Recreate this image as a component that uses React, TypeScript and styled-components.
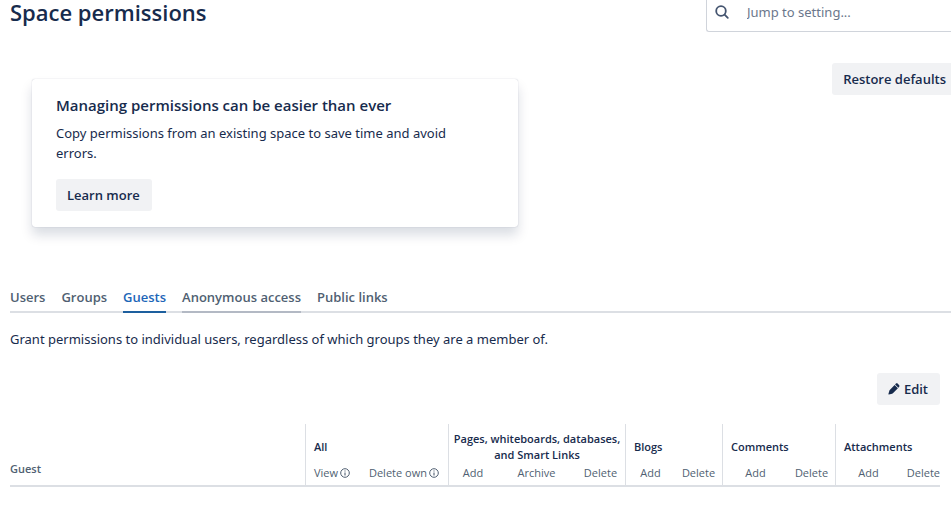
import React from "react";
import styled, { createGlobalStyle } from "styled-components";

const ink = "#172b4d";
const muted = "#505f72";

const GlobalStyle = createGlobalStyle`
  *, *::before, *::after { box-sizing: border-box; }
  body {
    margin: 0;
    overflow-x: hidden;
    background: #fff;
    color: ${ink};
    font: 400 13px/20px "Noto Sans", "Open Sans", sans-serif;
  }
  h1, h2, p { margin: 0; }
  button, input { font: inherit; color: inherit; }
`;

const Page = styled.div`
  padding-left: 10px;
`;

const Header = styled.header`
  display: flex;
  justify-content: space-between;
  align-items: flex-start;
`;

const Title = styled.h1`
  font-family: "Open Sans", sans-serif;
  font-size: 22px;
  line-height: 24px;
  font-weight: 600;
`;

const Search = styled.label`
  display: flex;
  align-items: center;
  gap: 16px;
  width: 245px;
  height: 32px;
  padding: 0 0 7px 6px;
  border: solid #d0d4db;
  border-width: 0 0 1px 1px;
  border-bottom-left-radius: 3px;
  color: #44546f;
`;

const SearchInput = styled.input`
  flex: 1;
  min-width: 0;
  padding: 0;
  border: 0;
  outline: 0;
  background: transparent;
  &::placeholder { color: #6b778c; opacity: 1; }
`;

const Intro = styled.section`
  display: flex;
  justify-content: space-between;
  align-items: flex-start;
  margin-top: 31px;
`;

const Button = styled.button<{ $flush?: boolean }>`
  display: inline-flex;
  align-items: center;
  gap: 4px;
  height: 32px;
  padding: 0 ${(p) => (p.$flush ? 5 : 12)}px 0 11px;
  border: 0;
  border-radius: ${(p) => (p.$flush ? "3px 0 0 3px" : "3px")};
  background: #f1f2f4;
  font-family: "Open Sans", sans-serif;
  font-weight: 600;
  white-space: nowrap;
`;

const Card = styled.article`
  flex: 0 1 486px;
  margin: 16px 22px 0;
  padding: 16px 24px;
  border-radius: 3px;
  box-shadow: 0 8px 12px rgba(9, 30, 66, 0.15), 0 0 1px rgba(9, 30, 66, 0.31);
`;

const CardTitle = styled.h2`
  font-family: "Open Sans", sans-serif;
  font-size: 15px;
  line-height: 20px;
  font-weight: 600;
`;

const CardText = styled.p`
  max-width: 410px;
  margin: 8px 0 16px;
`;

const Tabs = styled.div`
  display: flex;
  gap: 16px;
  margin-top: 57px;
  box-shadow: inset 0 -2px #dcdfe4;
`;

const Tab = styled.button<{ $line?: string }>`
  padding: 3px 0 4px;
  border: 0;
  border-bottom: 2px solid ${(p) => p.$line ?? "transparent"};
  background: none;
  color: ${muted};
  font-family: "Open Sans", sans-serif;
  font-weight: 600;
  white-space: nowrap;
  &[aria-selected="true"] { color: #1d66b8; }
`;

const Description = styled.p`
  margin-top: 16px;
`;

const Toolbar = styled.div`
  display: flex;
  justify-content: flex-end;
  margin: 24px 11px 0 0;
`;

const TableArea = styled.div`
  margin: 19px 11px 0 0;
`;

const Table = styled.table`
  width: 100%;
  table-layout: fixed;
  border-collapse: separate;
  border-spacing: 0;
  font-family: "Open Sans", sans-serif;
  font-size: 11px;
  line-height: 16px;
  color: ${muted};
`;

const Col = styled.col<{ $w?: number }>`
  width: ${(p) => (p.$w ? `${p.$w}px` : "auto")};
`;

const GuestHead = styled.th`
  padding: 0 0 8px;
  border-bottom: 2px solid #dcdfe4;
  vertical-align: bottom;
  text-align: left;
  font-weight: 600;
`;

const GroupHead = styled.th<{ $center?: boolean }>`
  height: 39px;
  padding: 7px 0 0 ${(p) => (p.$center ? 0 : 8)}px;
  border-left: 1px solid #dcdfe4;
  text-align: ${(p) => (p.$center ? "center" : "left")};
  color: ${ink};
  font-weight: 600;
  white-space: nowrap;
`;

const SubHead = styled.th<{ $first: boolean; $align: string }>`
  padding: 2px 0 4px ${(p) => (p.$align === "left" ? 8 : 0)}px;
  border-left: ${(p) => (p.$first ? "1px solid #dcdfe4" : "0")};
  border-bottom: 2px solid #dcdfe4;
  text-align: ${(p) => p.$align};
  font-weight: 400;
  white-space: nowrap;
`;

const Hint = styled.span`
  display: inline-flex;
  align-items: center;
  gap: 2px;
`;

const InfoIcon = () => (
  <svg width="10" height="10" viewBox="0 0 10 10" fill="none" stroke="currentColor" aria-hidden="true">
    <circle cx="5" cy="5" r="4.3" />
    <path d="M5 4.4v3M5 2.4v1.1" strokeWidth="1.1" />
  </svg>
);

const SearchIcon = () => (
  <svg width="18" height="18" viewBox="0 0 18 18" fill="none" stroke="currentColor" strokeWidth="1.8" strokeLinecap="round" aria-hidden="true">
    <circle cx="8" cy="8" r="4.8" />
    <path d="M11.6 11.6l3.2 3.2" />
  </svg>
);

const PencilIcon = () => (
  <svg width="12" height="12" viewBox="0 0 12 12" fill="currentColor" aria-hidden="true">
    <path d="M6.6 1.9l3.3 3.3-5 5c-.2.2-.5.4-.8.5l-3.2.9c-.3.1-.6-.2-.5-.5l.9-3.2c.1-.4.3-.7.5-.9zM7.1 1.4l.6-.6c.6-.6 1.5-.6 2.1 0l1.2 1.2c.6.6.6 1.5 0 2.1l-.6.6z" />
  </svg>
);

const tabs = [
  { name: "Users" },
  { name: "Groups" },
  { name: "Guests", line: "#1d5f9e" },
  { name: "Anonymous access", line: "#b3b9c4" },
  { name: "Public links" },
];

type Sub = { name: string; w: number; align?: string; info?: boolean };
const groups: { name: React.ReactNode; center?: boolean; subs: Sub[] }[] = [
  {
    name: "All",
    subs: [
      { name: "View", w: 56, align: "left", info: true },
      { name: "Delete own", w: 87, align: "left", info: true },
    ],
  },
  {
    name: <>Pages, whiteboards, databases,<br />and Smart Links</>,
    center: true,
    subs: [{ name: "Add", w: 49 }, { name: "Archive", w: 79 }, { name: "Delete", w: 49 }],
  },
  { name: "Blogs", subs: [{ name: "Add", w: 50 }, { name: "Delete", w: 47 }] },
  { name: "Comments", subs: [{ name: "Add", w: 66 }, { name: "Delete", w: 47 }] },
  { name: "Attachments", subs: [{ name: "Add", w: 66 }, { name: "Delete", w: 39, align: "right" }] },
];

export default function App() {
  return (
    <Page>
      <GlobalStyle />
      <Header>
        <Title>Space permissions</Title>
        <Search>
          <SearchIcon />
          <SearchInput type="text" placeholder="Jump to setting..." aria-label="Jump to setting" />
        </Search>
      </Header>
      <Intro>
        <Card>
          <CardTitle>Managing permissions can be easier than ever</CardTitle>
          <CardText>Copy permissions from an existing space to save time and avoid errors.</CardText>
          <Button type="button">Learn more</Button>
        </Card>
        <Button type="button" $flush>Restore defaults</Button>
      </Intro>
      <Tabs role="tablist">
        {tabs.map((t) => (
          <Tab key={t.name} type="button" role="tab" aria-selected={t.name === "Guests"} $line={t.line}>
            {t.name}
          </Tab>
        ))}
      </Tabs>
      <Description>
        Grant permissions to individual users, regardless of which groups they are a member of.
      </Description>
      <Toolbar>
        <Button type="button"><PencilIcon />Edit</Button>
      </Toolbar>
      <TableArea>
        <Table>
          <colgroup>
            <Col />
            {groups.flatMap((g, i) => g.subs.map((s) => <Col key={i + s.name} $w={s.w} />))}
          </colgroup>
          <thead>
            <tr>
              <GuestHead rowSpan={2} scope="col">Guest</GuestHead>
              {groups.map((g, i) => (
                <GroupHead key={i} colSpan={g.subs.length} scope="colgroup" $center={g.center}>
                  {g.name}
                </GroupHead>
              ))}
            </tr>
            <tr>
              {groups.flatMap((g, i) =>
                g.subs.map((s, j) => (
                  <SubHead key={i + s.name} scope="col" $first={j === 0} $align={s.align ?? "center"}>
                    {s.info ? <Hint>{s.name}<InfoIcon /></Hint> : s.name}
                  </SubHead>
                )),
              )}
            </tr>
          </thead>
        </Table>
      </TableArea>
    </Page>
  );
}
